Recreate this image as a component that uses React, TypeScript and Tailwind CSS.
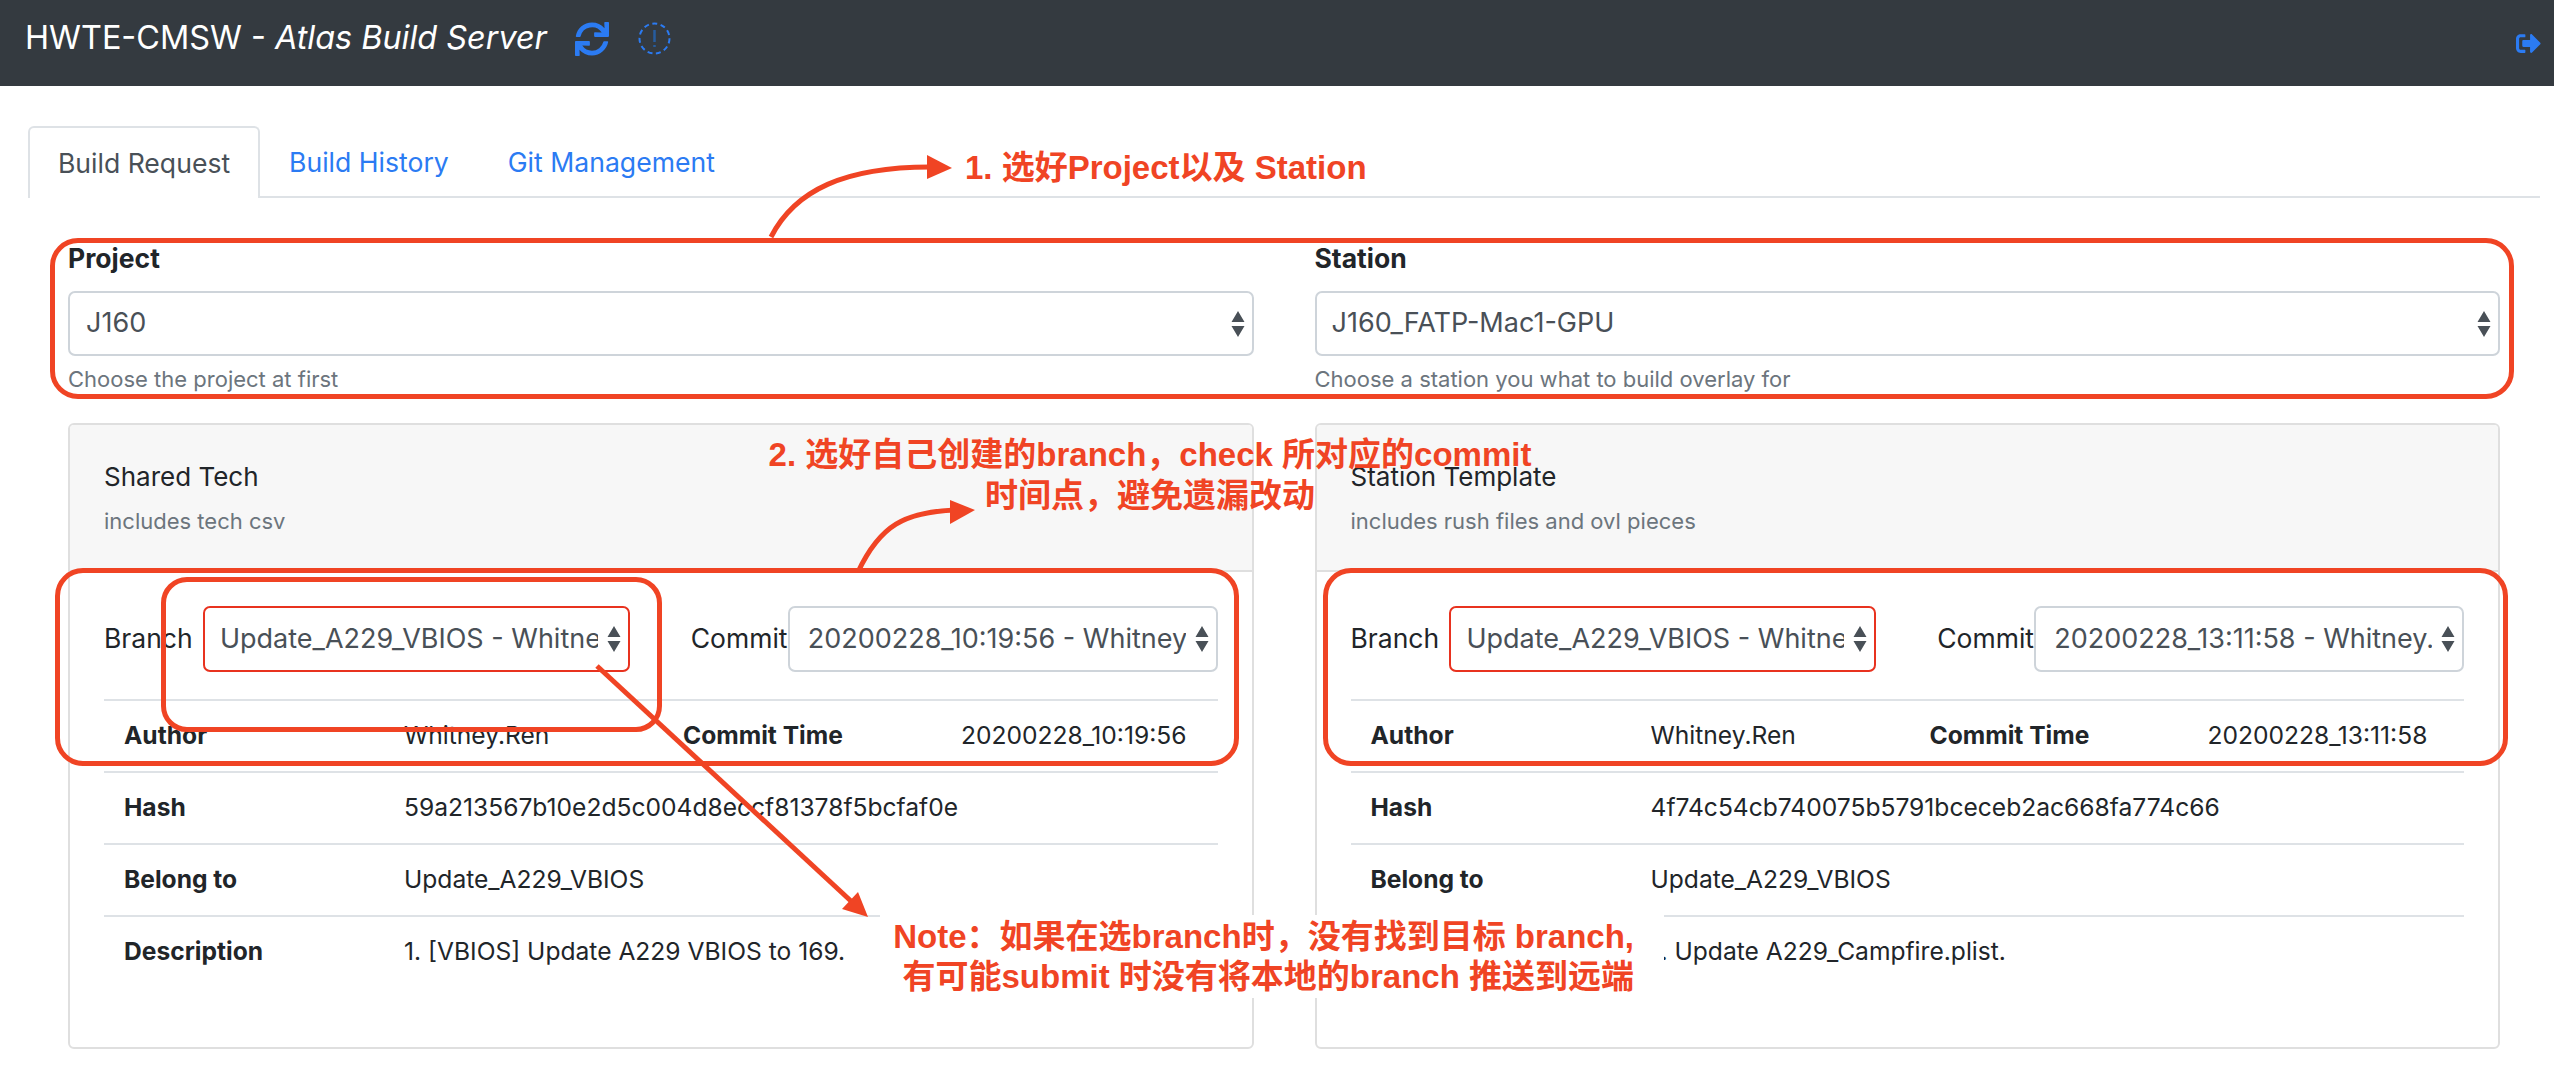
import React from "react";
import { FaSync, FaSignOutAlt } from "react-icons/fa";

interface SelectProp {
  value: string;
  red?: boolean;
  className?: string;
}

const Select = ({ value, red, className }: SelectProp) => {
  return (
    <div
      className={`relative flex items-center bg-white rounded-[7px] overflow-hidden whitespace-nowrap pr-[30px] text-[27px] text-[#495057] ${
        red ? "border-2 border-[#e8321f]" : "border-2 border-[#ced4da]"
      } ${className ?? ""}`}
    >
      <span className="overflow-hidden">{value}</span>
      <svg className="absolute right-[7px] top-1/2 -translate-y-1/2" width="14" height="26" viewBox="0 0 14 26">
        <path d="M7 0L13.5 11H.5zM7 26L.5 15h13z" fill="#495057" />
      </svg>
    </div>
  );
};

interface RowProp {
  label: string;
  value: string;
  label2?: string;
  value2?: string;
}

const Row = ({ label, value, label2, value2 }: RowProp) => {
  return (
    <div className="flex items-center h-[72px] pl-[20px] pb-[2px] border-t-2 border-[#dee2e6] text-[24.6px] text-[#212529] whitespace-nowrap">
      <div className="w-[280px] font-bold">{label}</div>
      <div className="w-[279px]">{value}</div>
      {label2 && <div className="w-[278px] font-bold">{label2}</div>}
      {value2 && <div>{value2}</div>}
    </div>
  );
};

interface CardProp {
  title: string;
  sub: string;
  branch: string;
  commit: string;
  time: string;
  hash: string;
  desc: string;
}

const Card = ({ title, sub, branch, commit, time, hash, desc }: CardProp) => {
  return (
    <div className="h-[626px] border-2 border-[#dfdfdf] rounded-[6px] overflow-hidden">
      <div className="h-[147px] bg-[#f7f7f7] border-b-2 border-[#dfdfdf] pl-[34px] pt-[34px]">
        <div className="text-[26px] leading-[36px] text-[#212529]">{title}</div>
        <div className="text-[22px] leading-[30px] mt-[11px] text-[#6c757d]">{sub}</div>
      </div>
      <div className="px-[34px] pt-[34px]">
        <div className="flex items-center h-[66px] mb-[27px] text-[26.5px] text-[#212529]">
          <div className="w-[99px]">Branch</div>
          <Select red value={branch} className="w-[427px] h-[66px] pl-[15px]" />
          <div className="ml-[61px] w-[97px]">Commit</div>
          <Select value={commit} className="w-[430px] h-[66px] pl-[18px]" />
        </div>
        <Row label="Author" value="Whitney.Ren" label2="Commit Time" value2={time} />
        <Row label="Hash" value={hash} />
        <Row label="Belong to" value="Update_A229_VBIOS" />
        <Row label="Description" value={desc} />
      </div>
    </div>
  );
};

const RedBox = ({ className }: { className: string }) => {
  return <div className={`absolute border-[5px] border-[#f04424] ${className}`} />;
};

const Note = ({ className, children }: { className: string; children: React.ReactNode }) => {
  return (
    <div
      className={`absolute font-['Liberation_Sans','Noto_Sans_CJK_SC',sans-serif] font-bold text-[#f04424] whitespace-nowrap ${className}`}
    >
      {children}
    </div>
  );
};

const App = () => {
  return (
    <div className="relative h-[1084px] overflow-hidden bg-white font-['Inter','Noto_Sans_CJK_SC',sans-serif]">
      <div className="flex items-center h-[86px] bg-[#343a40] pl-[25px] pr-[13px] pb-[9px]">
        <div className="text-[32.4px] text-white whitespace-nowrap">
          HWTE-CMSW - <span className="italic">Atlas Build Server</span>
        </div>
        <FaSync className="ml-[28px] text-[#2b7bf3] text-[34px]" />
        <svg className="ml-[29px]" width="33" height="33" viewBox="0 0 33 33">
          <circle cx="16.5" cy="16.5" r="15" fill="none" stroke="#2b7bf3" strokeWidth="2" strokeDasharray="5 3.5" />
          <path d="M16.5 8v12M16.5 23v2" stroke="#265c9e" strokeWidth="2.5" />
        </svg>
        <FaSignOutAlt className="ml-auto text-[#2b7bf3] text-[25px] mt-[10px]" />
      </div>

      <div className="pl-[28px] pr-[14px] pt-[40px]">
        <div className="flex h-[72px] border-b-2 border-[#dee2e6] text-[26.6px]">
          <div className="flex items-center justify-center w-[232px] h-[72px] pt-[2px] bg-white border-2 border-b-0 border-[#dee2e6] rounded-t-[6px] text-[#495057]">
            Build Request
          </div>
          <div className="flex items-center px-[29px] pt-[3px] text-[#2b7bf3]">Build History</div>
          <div className="flex items-center px-[30px] pt-[3px] text-[#2b7bf3]">Git Management</div>
        </div>

        <div className="px-[40px]">
          <div className="grid grid-cols-2 gap-x-[61px] mt-[40px]">
            <div>
              <div className="text-[26.5px] leading-[40px] font-bold text-[#212529] mb-[13px]">Project</div>
              <Select value="J160" className="h-[65px] pl-[16px]" />
              <div className="text-[22px] leading-[30px] mt-[8px] text-[#6c757d]">Choose the project at first</div>
            </div>
            <div>
              <div className="text-[26.5px] leading-[40px] font-bold text-[#212529] mb-[13px]">Station</div>
              <Select value="J160_FATP-Mac1-GPU" className="h-[65px] pl-[15px]" />
              <div className="text-[22px] leading-[30px] mt-[8px] text-[#6c757d]">
                Choose a station you what to build overlay for
              </div>
            </div>
          </div>

          <div className="grid grid-cols-2 gap-x-[61px] mt-[29px]">
            <Card
              title="Shared Tech"
              sub="includes tech csv"
              branch="Update_A229_VBIOS - Whitne"
              commit="20200228_10:19:56 - Whitney"
              time="20200228_10:19:56"
              hash="59a213567b10e2d5c004d8eccf81378f5bcfaf0e"
              desc="1. [VBIOS] Update A229 VBIOS to 169."
            />
            <Card
              title="Station Template"
              sub="includes rush files and ovl pieces"
              branch="Update_A229_VBIOS - Whitne"
              commit="20200228_13:11:58 - Whitney."
              time="20200228_13:11:58"
              hash="4f74c54cb740075b5791bceceb2ac668fa774c66"
              desc="1. Update A229_Campfire.plist."
            />
          </div>
        </div>
      </div>

      {/* annotations drawn over the page */}
      <div className="absolute left-[880px] top-[915px] w-[784px] h-[83px] bg-white" />
      <RedBox className="left-[50px] top-[238px] w-[2464px] h-[161px] rounded-[28px]" />
      <RedBox className="left-[55px] top-[568px] w-[1184px] h-[198px] rounded-[28px]" />
      <RedBox className="left-[161px] top-[577px] w-[501px] h-[155px] rounded-[26px]" />
      <RedBox className="left-[1323px] top-[568px] w-[1185px] h-[198px] rounded-[28px]" />

      <svg className="absolute left-0 top-0 pointer-events-none" width="2554" height="1084" viewBox="0 0 2554 1084">
        <path d="M771 237C795 190 845 167 930 167" fill="none" stroke="#f04424" strokeWidth="5" />
        <path d="M952 168L927 155V179z" fill="#f04424" />
        <path d="M858 572C880 525 905 512 955 510" fill="none" stroke="#f04424" strokeWidth="5" />
        <path d="M975 510L950 500V524z" fill="#f04424" />
        <path d="M597 666L852 902" fill="none" stroke="#f04424" strokeWidth="5" />
        <path d="M868 917L842 909L858 892z" fill="#f04424" />
      </svg>

      <Note className="left-[965px] top-[148px] text-[33px] leading-[40px]">1. 选好Project以及 Station</Note>
      <Note className="left-[768px] top-[434px] w-[764px] text-center text-[33px] leading-[41px]">
        <div>2. 选好自己创建的branch，check 所对应的commit</div>
        <div>时间点，避免遗漏改动</div>
      </Note>
      <Note className="left-[891px] top-[917px] w-[743px] text-right text-[33px] leading-[40px]">
        <div>Note：如果在选branch时，没有找到目标 branch,</div>
        <div>有可能submit 时没有将本地的branch 推送到远端</div>
      </Note>
    </div>
  );
};

export default App;
